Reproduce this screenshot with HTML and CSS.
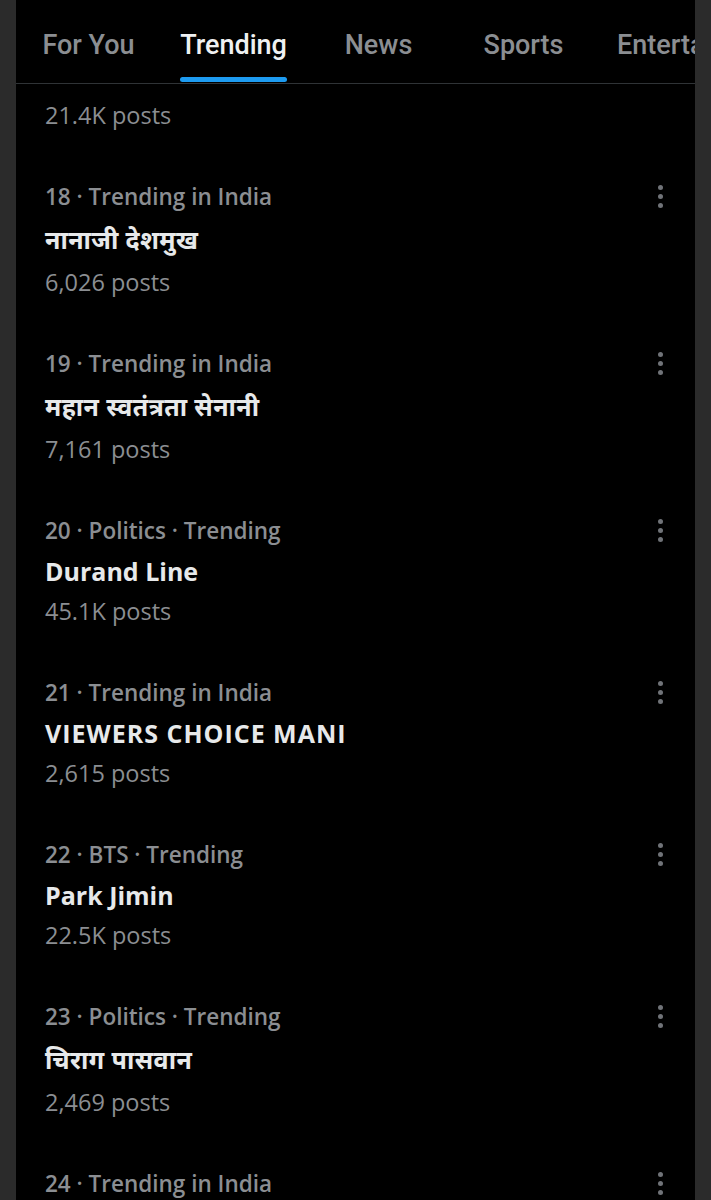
FILE: index.html
```html
<!DOCTYPE html>
<html lang="en">
<head>
    <meta charset="UTF-8">
    <meta name="viewport" content="width=device-width, initial-scale=1.0">
    <title>Explore - Trending</title>
    <link rel="stylesheet" href="styles.css">
</head>
<body>
    <div class="frame">
        <div class="edge"></div>

        <main class="screen">
            <nav class="tabs">
                <a class="tab">For You</a>
                <a class="tab active"><span>Trending</span></a>
                <a class="tab">News</a>
                <a class="tab">Sports</a>
                <a class="tab last">Entertainment</a>
            </nav>

            <div class="trend partial">
                <div class="trend-text">
                    <p class="count">21.4K posts</p>
                </div>
            </div>

            <div class="trend">
                <div class="trend-text">
                    <p class="meta">18 · Trending in India</p>
                    <p class="title hindi">नानाजी देशमुख</p>
                    <p class="count">6,026 posts</p>
                </div>
                <span class="more"><i></i><i></i><i></i></span>
            </div>

            <div class="trend">
                <div class="trend-text">
                    <p class="meta">19 · Trending in India</p>
                    <p class="title hindi">महान स्वतंत्रता सेनानी</p>
                    <p class="count">7,161 posts</p>
                </div>
                <span class="more"><i></i><i></i><i></i></span>
            </div>

            <div class="trend">
                <div class="trend-text">
                    <p class="meta">20 · Politics · Trending</p>
                    <p class="title">Durand Line</p>
                    <p class="count">45.1K posts</p>
                </div>
                <span class="more"><i></i><i></i><i></i></span>
            </div>

            <div class="trend">
                <div class="trend-text">
                    <p class="meta">21 · Trending in India</p>
                    <p class="title caps">VIEWERS CHOICE MANI</p>
                    <p class="count">2,615 posts</p>
                </div>
                <span class="more"><i></i><i></i><i></i></span>
            </div>

            <div class="trend">
                <div class="trend-text">
                    <p class="meta">22 · BTS · Trending</p>
                    <p class="title">Park Jimin</p>
                    <p class="count">22.5K posts</p>
                </div>
                <span class="more"><i></i><i></i><i></i></span>
            </div>

            <div class="trend">
                <div class="trend-text">
                    <p class="meta">23 · Politics · Trending</p>
                    <p class="title hindi">चिराग पासवान</p>
                    <p class="count">2,469 posts</p>
                </div>
                <span class="more"><i></i><i></i><i></i></span>
            </div>

            <div class="trend">
                <div class="trend-text">
                    <p class="meta">24 · Trending in India</p>
                </div>
                <span class="more"><i></i><i></i><i></i></span>
            </div>
        </main>

        <div class="edge"></div>
    </div>
</body>
</html>
```

FILE: styles.css
```css
html, body {
    margin: 0;
    height: 100%;
    overflow: hidden;
    background-color: #000;
}

body {
    font-family: "Open Sans", "Noto Sans", "Noto Sans Devanagari", sans-serif;
    color: #e7e9ea;
}

p {
    margin: 0;
}

.frame {
    display: flex;
    height: 1200px;
}

.edge {
    width: 16px;
    flex-shrink: 0;
    background-color: #2b2b2b;
}

.screen {
    flex: 1;
    min-width: 0;
    overflow: hidden;
    background-color: #000;
}

/* tab strip */
.tabs {
    display: flex;
    height: 83px;
    border-bottom: 1px solid #2f3336;
}

.tab {
    flex-shrink: 0;
    min-width: 113px;
    padding: 6px 16px 0;
    display: flex;
    align-items: center;
    justify-content: center;
    font-family: Roboto, "Open Sans", sans-serif;
    font-size: 27px;
    font-weight: 500;
    color: #8b8e92;
    white-space: nowrap;
}

.tab.last {
    padding-left: 21px;
}

.tab.active {
    color: #eff1f2;
    padding-top: 0;
}

.tab.active span {
    position: relative;
    display: flex;
    align-items: center;
    height: 100%;
    padding-top: 6px;
    box-sizing: border-box;
}

.tab.active span::after {
    content: "";
    position: absolute;
    left: 0;
    right: 0;
    bottom: 1px;
    height: 5px;
    border-radius: 3px;
    background-color: #1d9bf0;
}

/* trend rows */
.trend {
    display: flex;
    justify-content: space-between;
    align-items: flex-start;
    padding: 21px 32px 21px 29px;
}

.trend.partial {
    padding-top: 11px;
}

.meta {
    font-size: 22.5px;
    line-height: 40px;
    font-weight: 600;
    color: #8b8e92;
}

.title {
    font-size: 25px;
    line-height: 40px;
    font-weight: 700;
    color: #e7e9ea;
}

.title.caps {
    letter-spacing: 1px;
}

.title.hindi {
    line-height: 45px;
    letter-spacing: 0.4px;
}

.count {
    font-size: 23.5px;
    line-height: 40px;
    color: #8b8e92;
}

.more {
    display: flex;
    flex-direction: column;
    gap: 4px;
    padding-top: 8px;
}

.more i {
    width: 5px;
    height: 5px;
    border-radius: 50%;
    background-color: #707378;
}
```
